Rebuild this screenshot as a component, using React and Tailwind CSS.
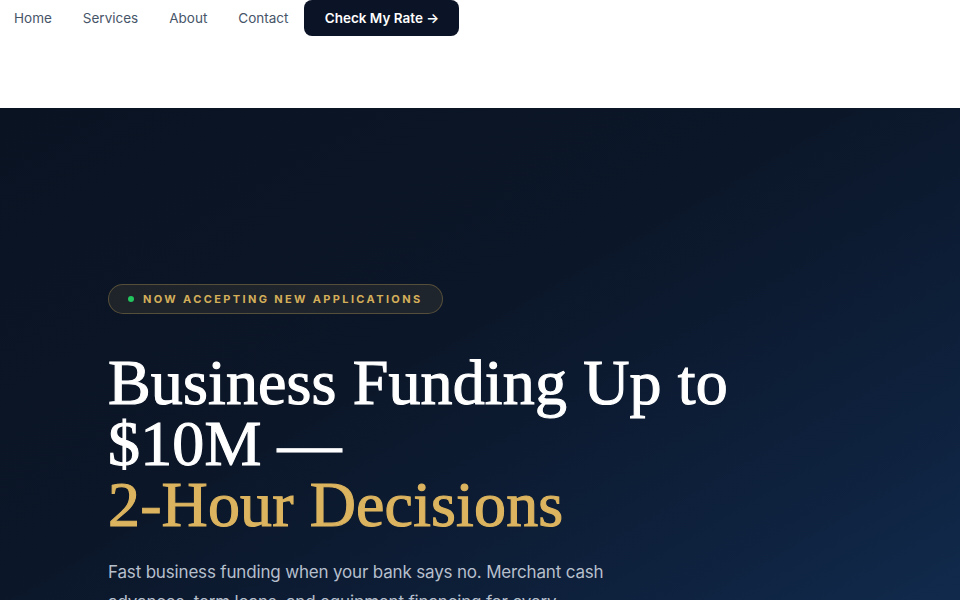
import React from "react";

export default function App() {
  return (
    <div className="w-[960px] h-[600px] overflow-hidden bg-white" style={{ fontFamily: "Inter, 'Noto Sans', sans-serif" }}>
      <header className="h-[108px] bg-white">
        <nav className="flex items-center h-[36px] pl-[14px] pt-[1px]">
          <a className="text-[13.5px] text-[#475569] mr-[31px]">Home</a>
          <a className="text-[13.5px] text-[#475569] mr-[31px]">Services</a>
          <a className="text-[13.5px] text-[#475569] mr-[31px]">About</a>
          <a className="text-[13.5px] text-[#475569] mr-[16px]">Contact</a>
          <button className="h-[36px] w-[155px] -mt-[1px] rounded-lg bg-[#0b1426] text-white text-[13.5px] font-semibold">
            Check My Rate →
          </button>
        </nav>
      </header>
      <section className="h-[492px] bg-[linear-gradient(150deg,#0a1322_0%,#0b1628_45%,#0e213d_80%,#112a4c_100%)] pl-[108px] pt-[176px]">
        <div className="inline-flex items-center h-[30px] px-[19px] rounded-full border border-[#d4af5a]/30 bg-[#d4af5a]/10">
          <span className="w-[6px] h-[6px] rounded-full bg-[#22c55e] mr-[9px]"></span>
          <span className="text-[11px] font-bold tracking-[0.215em] text-[#d4af5a]">NOW ACCEPTING NEW APPLICATIONS</span>
        </div>
        <h1 className="mt-[38px] text-[64px] leading-[61px] text-white font-normal tracking-[0.002em] [-webkit-text-stroke:1.1px_currentColor]" style={{ fontFamily: "'Liberation Serif', 'DejaVu Serif', serif" }}>
          Business Funding Up to
          <br />
          $10M —
          <br />
          <span className="text-[#dcb45f]">2-Hour Decisions</span>
        </h1>
        <p className="mt-[22px] w-[520px] text-[17px] leading-[30px] text-[#b6bfcc] tracking-[-0.01em]">
          Fast business funding when your bank says no. Merchant cash advances, term loans, and equipment financing for every business.
        </p>
      </section>
    </div>
  );
}
